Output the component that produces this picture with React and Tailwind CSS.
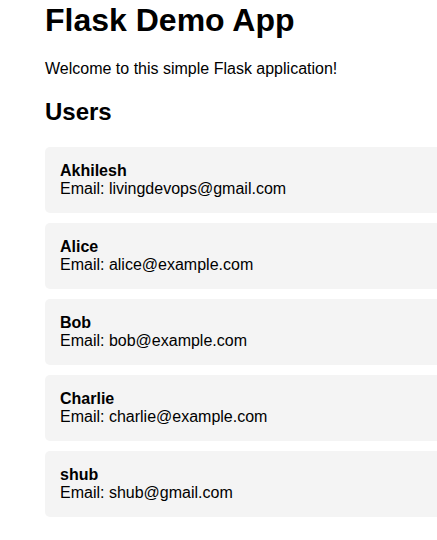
const USERS = [
  { name: "Akhilesh", email: "livingdevops@gmail.com" },
  { name: "Alice", email: "alice@example.com" },
  { name: "Bob", email: "bob@example.com" },
  { name: "Charlie", email: "charlie@example.com" },
  { name: "shub", email: "shub@gmail.com" },
]

export default function App() {
  return (
    <div className="min-h-screen overflow-x-hidden bg-white text-black font-['Liberation_Sans',Arial,sans-serif]">
      <div className="w-[800px] pl-[45px] pt-[2px]">
        <h1 className="text-[32px] font-bold leading-[37px]">Flask Demo App</h1>
        <p className="mt-[21px] text-[16px] leading-[18.4px]">Welcome to this simple Flask application!</p>
        <h2 className="mt-[20px] text-[24px] font-bold leading-[27.6px]">Users</h2>
        <ul className="mt-[21px]">
          {USERS.map(u => (
            <li key={u.email} className="mb-[10px] rounded-[5px] bg-[#f4f4f4] p-[15px] text-[16px] leading-[18px]">
              <strong className="block font-bold">{u.name}</strong>
              <span>Email: {u.email}</span>
            </li>
          ))}
        </ul>
      </div>
    </div>
  )
}
